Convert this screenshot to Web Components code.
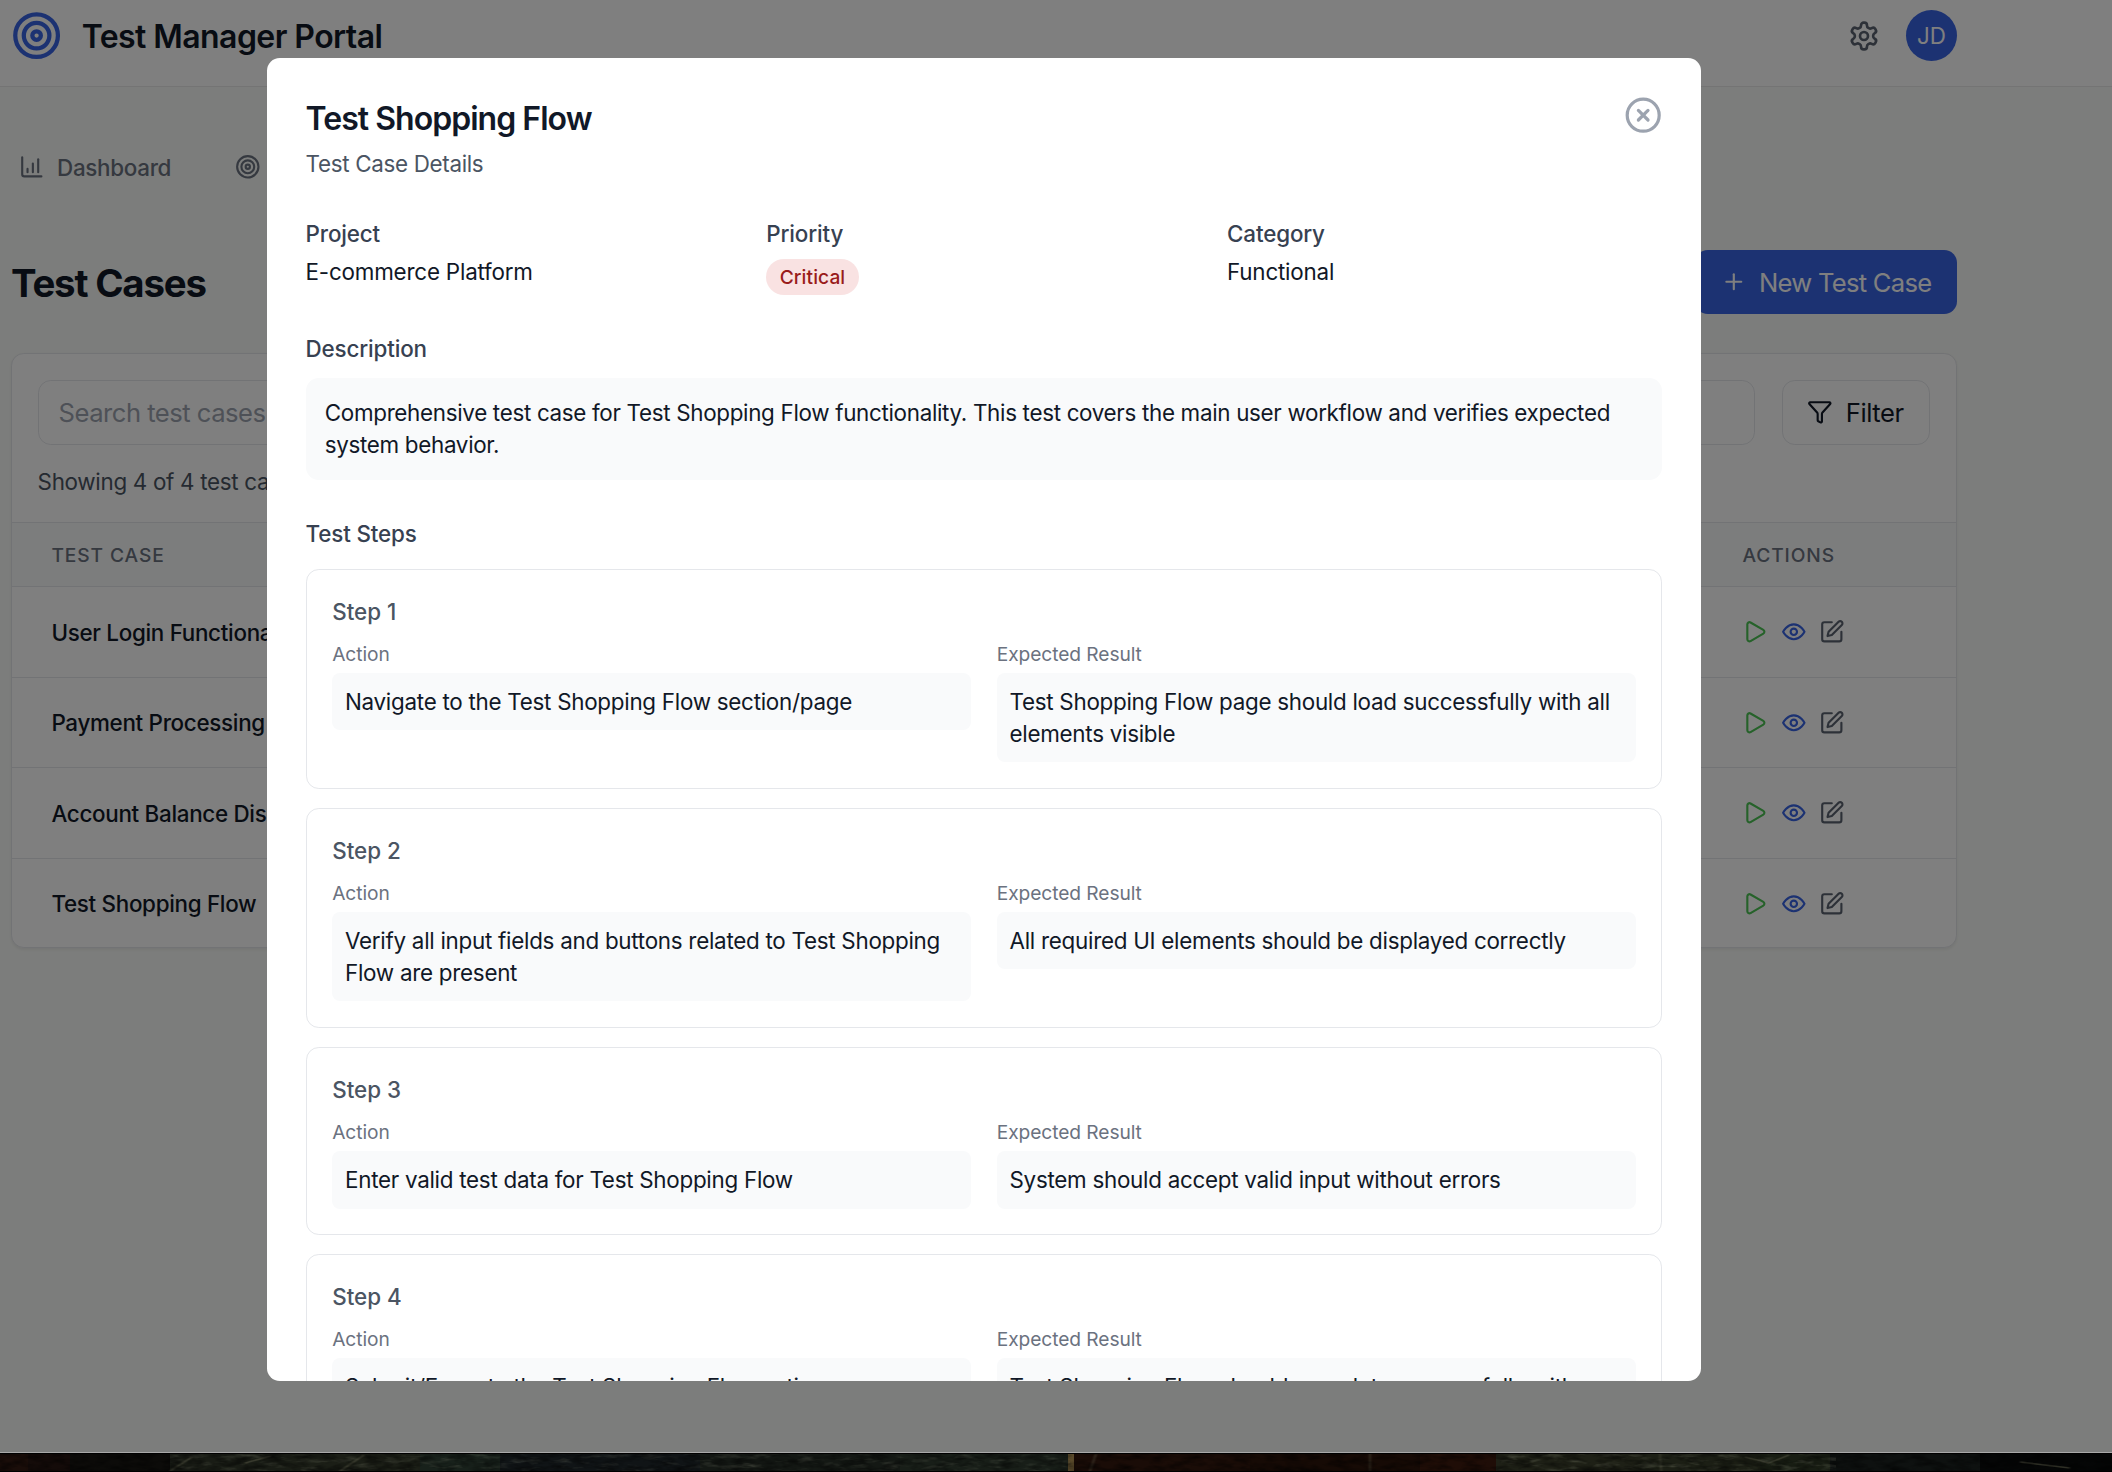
<!DOCTYPE html>
<html><head><meta charset="utf-8"><style>
html,body{margin:0;padding:0;background:#f9fbf8;}
body{width:2112px;height:1472px;overflow:hidden;font-family:Inter,"Liberation Sans",sans-serif;position:relative;}
</style></head><body>
<tm-app></tm-app>
<script>
const S={ic:(p,s,c,w)=>`<svg xmlns="http://www.w3.org/2000/svg" width="${s}" height="${s}" viewBox="0 0 24 24" fill="none" stroke="${c}" stroke-width="${w||2}" stroke-linecap="round" stroke-linejoin="round" style="display:block;flex:none">${p}</svg>`};
const P={
target:'<circle cx="12" cy="12" r="10"/><circle cx="12" cy="12" r="6"/><circle cx="12" cy="12" r="2"/>',
bars:'<path d="M3 3v16a2 2 0 0 0 2 2h16"/><path d="M8 17v-3"/><path d="M13 17V9"/><path d="M18 17V5"/>',
gear:'<path d="M12.22 2h-.44a2 2 0 0 0-2 2v.18a2 2 0 0 1-1 1.73l-.43.25a2 2 0 0 1-2 0l-.15-.08a2 2 0 0 0-2.73.73l-.22.38a2 2 0 0 0 .73 2.73l.15.1a2 2 0 0 1 1 1.72v.51a2 2 0 0 1-1 1.74l-.15.09a2 2 0 0 0-.73 2.73l.22.38a2 2 0 0 0 2.73.73l.15-.08a2 2 0 0 1 2 0l.43.25a2 2 0 0 1 1 1.73V20a2 2 0 0 0 2 2h.44a2 2 0 0 0 2-2v-.18a2 2 0 0 1 1-1.73l.43-.25a2 2 0 0 1 2 0l.15.08a2 2 0 0 0 2.73-.73l.22-.39a2 2 0 0 0-.73-2.73l-.15-.08a2 2 0 0 1-1-1.74v-.5a2 2 0 0 1 1-1.74l.15-.09a2 2 0 0 0 .73-2.73l-.22-.38a2 2 0 0 0-2.73-.73l-.15.08a2 2 0 0 1-2 0l-.43-.25a2 2 0 0 1-1-1.73V4a2 2 0 0 0-2-2z"/><circle cx="12" cy="12" r="3"/>',
plus:'<path d="M5 12h14"/><path d="M12 5v14"/>',
filter:'<path d="M10 20a1 1 0 0 0 .553.895l2 1A1 1 0 0 0 14 21v-7a2 2 0 0 1 .517-1.341L21.74 4.67A1 1 0 0 0 21 3H3a1 1 0 0 0-.742 1.67l7.225 7.989A2 2 0 0 1 10 14z"/>',
play:'<path d="M5 5a2 2 0 0 1 3.008-1.728l11.997 6.998a2 2 0 0 1 .003 3.458l-12 7A2 2 0 0 1 5 19z"/>',
eye:'<path d="M2 12s3.6-7 10-7 10 7 10 7-3.6 7-10 7-10-7-10-7z"/><circle cx="12" cy="12" r="3"/>',
edit:'<path d="M12 3H5a2 2 0 0 0-2 2v14a2 2 0 0 0 2 2h14a2 2 0 0 0 2-2v-7"/><path d="M18.375 2.625a2.121 2.121 0 1 1 3 3L12 15l-4 1 1-4z"/>',
x:'<circle cx="12" cy="12" r="10"/><path d="m15 9-6 6"/><path d="m9 9 6 6"/>'
};
const BLUE='#3864e4';
function def(name,css,html){customElements.define(name,class extends HTMLElement{constructor(){super();const r=this.attachShadow({mode:'open'});r.innerHTML=`<style>${css}</style>`+(typeof html==='function'?html(this):html);}});}

def('tm-header',`:host{display:flex;align-items:center;box-sizing:border-box;height:87px;padding:10px 155px 25px 11px;background:#fff;border-bottom:1.6px solid #e8e8e8;}
.t{font-size:32px;line-height:51px;font-weight:600;color:#111827;margin-left:19.5px;flex:1;letter-spacing:-.57px;padding-top:1.5px}
.g{margin-right:25.6px}
.a{width:51.2px;height:51.2px;border-radius:50%;background:${BLUE};color:#fff;font-size:22.4px;display:flex;align-items:center;justify-content:center;font-weight:400}`,
()=>`${S.ic(P.target,51.2,BLUE)}<div class="t">Test Manager Portal</div><div class="g">${S.ic(P.gear,32,'#5b6370')}</div><div class="a">JD</div>`);

def('tm-nav',`:host{display:flex;align-items:center;height:32px;padding:64px 0 0 18.7px;color:#6b7280;font-size:22.4px;font-weight:500;letter-spacing:-.3px}
.i{display:flex;align-items:center;gap:12.8px}`,
()=>`<div class="i">${S.ic(P.bars,25.6,'#6b7280')}<span>Dashboard</span></div><div class="i" style="margin-left:64px">${S.ic(P.target,25.6,'#6b7280')}</div>`);

def('tm-title',`:host{display:flex;align-items:center;justify-content:space-between;height:64px;margin:67px 155px 0 11px}
h1{margin:0;padding-top:3px;font-size:38.4px;line-height:51px;font-weight:700;color:#111827;letter-spacing:-1.2px}
.b{display:flex;align-items:center;gap:12.8px;height:64px;box-sizing:border-box;padding:0 25.6px;border-radius:12.8px;background:${BLUE};color:#fff;font-size:25.6px;font-weight:400;letter-spacing:-.73px}`,
()=>`<h1>Test Cases</h1><div class="b">${S.ic(P.plus,25.6,'#fff')}<span>New Test Case</span></div>`);

def('tm-row',`:host{display:grid;grid-template-columns:1fr 252px;align-items:center;height:90.5px;box-sizing:border-box;border-top:1.6px solid #e5e7eb;}
.n{padding-left:39.4px;font-size:22.4px;font-weight:500;color:#111827;letter-spacing:-.3px}
.a{display:flex;gap:12.8px;padding-left:38.4px}`,
(h)=>`<div class="n">${h.getAttribute('name')}</div><div class="a">${S.ic(P.play,25.6,'#4cc455')}${S.ic(P.eye,25.6,BLUE)}${S.ic(P.edit,25.6,'#5b6370')}</div>`);

def('tm-card',`:host{display:block;margin:39px 155px 0 11px;box-sizing:border-box;height:595px;border:1.6px solid #e5e7eb;border-radius:12.8px;background:#fff;box-shadow:0 1.6px 3px rgba(0,0,0,.06);overflow:hidden}
.top{padding:25.6px 25.6px 0;display:flex;gap:27px}
.s{flex:1;height:65px;box-sizing:border-box;border:1.6px solid #e5e7eb;border-radius:12.8px;display:flex;align-items:center;padding-left:20px;font-size:25.6px;color:#9ca3af;letter-spacing:-.5px}
.f{width:148px;height:65px;box-sizing:border-box;border:1.6px solid #e5e7eb;border-radius:12.8px;display:flex;align-items:center;gap:13px;padding-left:23.8px;font-size:25.6px;color:#111827;letter-spacing:-.45px}
.c{padding:21px 25.6px 24.4px;font-size:22.4px;line-height:32px;color:#4b5563;letter-spacing:-.3px}
.h{display:grid;grid-template-columns:1fr 252px;align-items:center;height:64.5px;box-sizing:border-box;background:#f9fafb;border-top:1.6px solid #e5e7eb;font-size:19.2px;font-weight:500;letter-spacing:.9px;color:#6b7280;}
.h div{padding-left:38.4px}.h div:first-child{padding-left:39.4px}`,
()=>`<div class="top"><div class="s">Search test cases...</div><div class="f">${S.ic(P.filter,25.6,'#111827')}<span>Filter</span></div></div>
<div class="c">Showing 4 of 4 test cases</div>
<div class="h"><div>TEST CASE</div><div>ACTIONS</div></div>
<tm-row name="User Login Functionality"></tm-row><tm-row name="Payment Processing"></tm-row><tm-row name="Account Balance Display"></tm-row><tm-row name="Test Shopping Flow"></tm-row>`);

def('tm-step',`:host{display:block;box-sizing:border-box;border:1.6px solid #e5e7eb;border-radius:12.8px;padding:26px 25.6px 25.6px;background:#fff}
.t{font-size:22.4px;line-height:32px;font-weight:500;color:#4b5563;margin-bottom:13.8px}
.g{display:grid;grid-template-columns:1fr 1fr;gap:25.6px}
.l{font-size:19.2px;line-height:25.6px;color:#6b7280;margin-bottom:5.6px;letter-spacing:-.08px}
.b{background:#f9fafb;border-radius:8px;padding:12.8px;font-size:22.4px;line-height:32px;color:#111827;letter-spacing:-.27px}`,
(h)=>`<div class="t">Step ${h.getAttribute('n')}</div><div class="g"><div><div class="l">Action</div><div class="b">${h.getAttribute('a')}</div></div><div><div class="l">Expected Result</div><div class="b">${h.getAttribute('e')}</div></div></div>`);

def('tm-modal',`:host{position:absolute;left:267px;top:58px;width:1434px;height:1323px;box-sizing:border-box;background:#fff;border-radius:12.8px;overflow:hidden;padding:39.4px 38.8px 0 38.6px}
.hd{display:flex;justify-content:space-between;margin-top:-1px}
h2{margin:1px 0 0;font-size:32px;line-height:44.8px;font-weight:600;color:#111827;letter-spacing:-.97px}
.sub{margin-top:5.4px;font-size:22.4px;line-height:32px;color:#4b5563;letter-spacing:-.32px}
.m{display:grid;grid-template-columns:repeat(3,1fr);gap:25.6px;margin-top:38.4px}
.lb{font-size:22.4px;line-height:32px;font-weight:500;color:#374151;letter-spacing:-.15px}
.v{margin-top:6.4px;font-size:22.4px;line-height:32px;color:#111827;letter-spacing:-.2px}
.bd{display:inline-block;margin-top:9px;height:36px;line-height:36px;padding:0 13.4px;border-radius:18px;background:#f9e2e2;color:#991b1b;font-size:19.2px;font-weight:500;letter-spacing:.08px}
.ds{margin-top:38px}
.box{margin-top:12.8px;background:#f9fafb;border-radius:12.8px;padding:19.2px;font-size:22.4px;line-height:32px;color:#111827;letter-spacing:-.315px}
.ts{margin-top:37.4px;margin-bottom:19.2px}
.st{display:flex;flex-direction:column;gap:19px}`,
()=>`<div class="hd"><div><h2>Test Shopping Flow</h2><div class="sub">Test Case Details</div></div>${S.ic(P.x,38.4,'#9ca3af')}</div>
<div class="m"><div><div class="lb">Project</div><div class="v">E-commerce Platform</div></div><div><div class="lb">Priority</div><span class="bd">Critical</span></div><div><div class="lb">Category</div><div class="v">Functional</div></div></div>
<div class="ds lb">Description</div>
<div class="box">Comprehensive test case for Test Shopping Flow functionality. This test covers the main user workflow and verifies expected system behavior.</div>
<div class="ts lb">Test Steps</div>
<div class="st">
<tm-step n="1" a="Navigate to the Test Shopping Flow section/page" e="Test Shopping Flow page should load successfully with all elements visible"></tm-step>
<tm-step n="2" a="Verify all input fields and buttons related to Test Shopping Flow are present" e="All required UI elements should be displayed correctly"></tm-step>
<tm-step n="3" a="Enter valid test data for Test Shopping Flow" e="System should accept valid input without errors"></tm-step>
<tm-step n="4" a="Submit/Execute the Test Shopping Flow action" e="Test Shopping Flow should complete successfully with expected results"></tm-step>
</div>`);

const bands=[[0,28,'#1a0d09'],[28,70,'#140b09'],[70,170,'#0c0b09'],[170,290,'#191c15'],[290,420,'#1b1e16'],[420,500,'#18211b'],[500,700,'#101416'],[700,900,'#141814'],[900,1068,'#181e18'],[1068,1074,'#5a4a2b'],[1074,1250,'#1a0c07'],[1250,1420,'#160a05'],[1420,1496,'#1f0d07'],[1496,1640,'#1e2016'],[1640,1760,'#1c1f15'],[1760,1830,'#181d13'],[1830,1980,'#0e1110'],[1980,2112,'#050606']];
def('tm-strip',`:host{position:absolute;left:0;top:1452px;width:2112px;height:20px;box-sizing:border-box;border-top:1.6px solid #a9a9a9;background:#000}
svg{position:absolute;left:0;top:1.4px;display:block}`,
()=>`<svg xmlns="http://www.w3.org/2000/svg" width="2112" height="17" viewBox="0 0 2112 17"><defs>
<filter id="n" x="0" y="0" width="100%" height="100%"><feTurbulence type="fractalNoise" baseFrequency=".06 .16" numOctaves="3" seed="7"/><feColorMatrix values="0 0 0 0 0 0 0 0 0 0 0 0 0 0 0 1.9 0 0 0 -.72"/></filter>
<filter id="l" x="0" y="0" width="100%" height="100%"><feTurbulence type="fractalNoise" baseFrequency=".05 .2" numOctaves="3" seed="21"/><feColorMatrix values="0 0 0 0 .45 0 0 0 0 .47 0 0 0 0 .34 2.4 0 0 0 -1.25"/></filter>
<filter id="b"><feGaussianBlur stdDeviation="1.2 .4"/></filter></defs>
${bands.map(b=>`<rect x="${b[0]}" y="0" width="${b[1]-b[0]}" height="17" fill="${b[2]}"/>`).join('')}
<g filter="url(#b)" stroke="#5c5c48" stroke-width="1.6" fill="none" opacity=".5"><path d="M170 17l22-14M245 9l26-7M340 17l24-16M1090 17l6-17M1370 0v17M1745 3l24 6 20-8M1660 0l1 17M2020 8l50 6"/></g>
<rect x="170" width="900" height="17" filter="url(#l)" opacity=".22"/><rect x="1496" width="340" height="17" filter="url(#l)" opacity=".28"/>
<rect width="2112" height="17" filter="url(#n)" opacity=".6"/></svg>`);

def('tm-app',`:host{display:block;position:relative;width:2112px;height:1472px}
.ov{position:absolute;left:0;top:0;width:2112px;height:1452px;background:rgba(0,0,0,.5)}`,
()=>`<tm-header></tm-header><tm-nav></tm-nav><tm-title></tm-title><tm-card></tm-card><div class="ov"></div><tm-modal></tm-modal><tm-strip></tm-strip>`);
</script>
</body></html>
